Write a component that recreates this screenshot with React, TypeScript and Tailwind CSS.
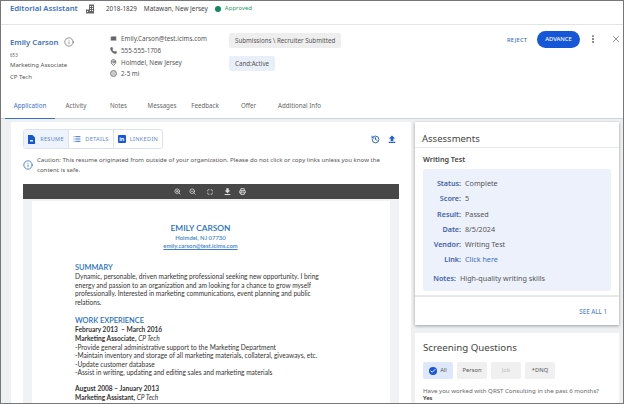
import {
  Check,
  History,
  Info,
  List,
  Mail,
  MapPin,
  Maximize,
  MoreVertical,
  Phone,
  Printer,
  X,
  ZoomIn,
  ZoomOut,
} from "lucide-react";

const tabs = [
  { label: "Activity", width: "w-[42px]" },
  { label: "Notes", width: "w-[43px]" },
  { label: "Messages", width: "w-[44px]" },
  { label: "Feedback", width: "w-[42px]" },
  { label: "Offer", width: "w-[45px]" },
  { label: "Additional Info", width: "w-[57px]" },
];

const results = [
  ["Status:", "Complete"],
  ["Score:", "5"],
  ["Result:", "Passed"],
  ["Date:", "8/5/2024"],
  ["Vendor:", "Writing Test"],
];

const duties = [
  "-Provide general administrative support to the Marketing Department",
  "-Maintain inventory and storage of all marketing materials, collateral, giveaways, etc.",
  "-Update customer database",
  "-Assist in writing, updating and editing sales and marketing materials",
];

function ArrowBar({ up, className }: { up?: boolean; className: string }) {
  return (
    <svg className={className} viewBox="0 0 10 10" fill="currentColor">
      <path d={up ? "M5 0.5 9 4.5H6.7V7.5H3.3V4.5H1zM1 8.5h8V10H1z" : "M3.3 0.5H6.7V3.5H9L5 7.5 1 3.5H3.3zM1 8.5h8V10H1z"} />
    </svg>
  );
}

export default function App() {
  return (
    <div className="w-[624px] h-[404px] overflow-hidden flex flex-col bg-white border border-[#777] font-['Noto_Sans',sans-serif] text-[#444]">
      {/* job bar */}
      <div className="h-[24px] shrink-0 flex items-center pl-[9px] pb-[8px] border-b border-[#e4e4e4]">
        <span className="text-[7.7px] font-semibold text-[#3d6fc4] w-[75px] whitespace-nowrap">Editorial Assistant</span>
        <svg className="w-[10px] h-[10px] text-[#666] mr-[11px]" viewBox="0 0 10 10" fill="currentColor">
          <path d="M4 0.5h5v9H1v-4h3zM5 2v1h1V2zM7 2v1h1V2zM5 4v1h1V4zM7 4v1h1V4zM5 6v1h1V6zM7 6v1h1V6zM2 7v1h1V7z" />
        </svg>
        <span className="text-[6.3px] text-[#444] mr-[7px]">2018-1829</span>
        <span className="text-[6.4px] text-[#444] mr-[7px]">Matawan, New Jersey</span>
        <span className="w-[6px] h-[6px] rounded-full bg-[#0f8a5f] mr-[4px]" />
        <span className="text-[6px] text-[#2b9a6b]">Approved</span>
      </div>

      {/* candidate */}
      <div className="h-[66px] shrink-0 flex pl-[9px]">
        <div className="w-[100px] pt-[10px]">
          <div className="flex items-center gap-[6px]">
            <span className="text-[7.7px] leading-[14px] font-semibold text-[#3d6fc4]">Emily Carson</span>
            <Info className="w-[10px] h-[10px] text-[#555]" strokeWidth={1.5} />
          </div>
          <div className="text-[4.5px] leading-[8px] text-[#666] mt-[2px]">653</div>
          <div className="text-[6px] leading-[11.5px] text-[#555] mt-[1px]">Marketing Associate</div>
          <div className="text-[6px] leading-[11.5px] text-[#555]">CP Tech</div>
        </div>
        <div className="w-[119px] pt-[8px] flex flex-col text-[6.3px] text-[#555]">
          <div className="h-[11.7px] flex items-center gap-[4px]">
            <Mail className="w-[7px] h-[7px] text-[#666]" fill="#666" stroke="#fff" strokeWidth={1.5} />
            Emily.Carson@test.icims.com
          </div>
          <div className="h-[11.7px] flex items-center gap-[4px]">
            <Phone className="w-[7px] h-[7px] text-[#666]" fill="#666" />
            555-555-1706
          </div>
          <div className="h-[11.7px] flex items-center gap-[4px]">
            <MapPin className="w-[7px] h-[7px] text-[#666]" strokeWidth={3} />
            Holmdel, New Jersey
          </div>
          <div className="h-[11.7px] flex items-center gap-[4px]">
            <span className="w-[7px] h-[7px] rounded-full border border-[#888] bg-[#ccc]" />
            2-5 mi
          </div>
        </div>
        <div className="w-[278px] pt-[8px] flex flex-col items-start gap-[8px] text-[6.2px] text-[#555]">
          <span className="h-[15px] px-[6px] flex items-center rounded-[2px] bg-[#eeeeee]">Submissions \ Recruiter Submitted</span>
          <span className="h-[15px] px-[6px] flex items-center rounded-[2px] bg-[#e9eff8]">Cand:Active</span>
        </div>
        <div className="flex-1 flex items-start pt-[6px]">
          <span className="w-[22px] text-[5.8px] font-medium text-[#3d6fc4] tracking-[0.2px] mt-[5px] mr-[8px]">REJECT</span>
          <span className="h-[17px] w-[43px] rounded-full bg-[#1557d6] text-white text-[5.8px] font-medium flex items-center justify-center">ADVANCE</span>
          <MoreVertical className="w-[10px] h-[10px] text-[#555] ml-[8px] mt-[3px]" strokeWidth={2.5} />
          <X className="w-[10px] h-[10px] text-[#555] ml-[13px] mt-[3px]" strokeWidth={1.5} />
        </div>
      </div>

      {/* tabs */}
      <div className="h-[28px] shrink-0 flex items-end pl-[4px] border-b border-[#cfd2d4] text-[6.2px] text-[#666]">
        <div className="h-[27px] w-[50px] pt-[2px] flex items-center justify-center text-[#3d6fc4] border-b border-[#3d6fc4] mb-[-1px]">Application</div>
        {tabs.map((t) => (
          <div key={t.label} className={`h-[27px] ${t.width} pt-[2px] flex items-center justify-center whitespace-nowrap`}>
            {t.label}
          </div>
        ))}
      </div>

      {/* body */}
      <div className="flex-1 min-h-0 flex gap-[4px] bg-[#eef0f2] pt-[3px] pl-[10px] pr-[4px] overflow-hidden">
        <div className="w-[400px] shrink-0 bg-white px-[12px] pt-[7px] flex flex-col">
          <div className="flex items-center justify-between pr-[3px]">
            <div className="h-[20px] flex items-center rounded-[3px] border border-[#dbe3ee] text-[5.6px] tracking-[0.3px] text-[#5d86cc]">
              <div className="h-full w-[45px] flex items-center justify-center gap-[5px] bg-[#edf2fb] border-r border-[#dbe3ee] rounded-l-[3px]">
                <svg className="w-[7px] h-[9px] text-[#1557d6]" viewBox="0 0 7 9" fill="currentColor">
                  <path d="M0 0h4.5L7 2.5V9H0zM2 5v1.5h3V5z" fillRule="evenodd" />
                </svg>
                RESUME
              </div>
              <div className="h-full w-[45px] flex items-center justify-center gap-[4px] border-r border-[#dbe3ee]">
                <List className="w-[8px] h-[8px] text-[#1557d6]" strokeWidth={2.5} />
                DETAILS
              </div>
              <div className="h-full w-[48px] flex items-center justify-center gap-[4px]">
                <span className="w-[8px] h-[8px] rounded-[1px] bg-[#1557d6] text-white text-[5.5px] leading-[8px] font-bold text-center tracking-normal">in</span>
                LINKEDIN
              </div>
            </div>
            <div className="flex items-center gap-[8px] text-[#1f5fd0]">
              <History className="w-[9px] h-[9px]" strokeWidth={2.5} />
              <ArrowBar up className="w-[8px] h-[8px]" />
            </div>
          </div>

          <div className="flex items-center gap-[4px] mt-[6px] h-[20px]">
            <Info className="w-[10px] h-[10px] text-[#2f6fe0] shrink-0" strokeWidth={2} />
            <p className="text-[6.1px] leading-[9.7px] text-[#555]">
              Caution: This resume originated from outside of your organization. Please do not click or copy links unless you know the content is safe.
            </p>
          </div>

          <div className="h-[15px] mt-[9px] shrink-0 bg-[#474747] flex items-center justify-center text-[#ddd]">
            <div className="flex items-center ml-[-2px]">
              <ZoomIn className="w-[7px] h-[7px]" strokeWidth={2.5} />
              <ZoomOut className="w-[7px] h-[7px] ml-[8px]" strokeWidth={2.5} />
              <Maximize className="w-[6px] h-[6px] ml-[11px]" strokeWidth={3} />
              <ArrowBar className="w-[7px] h-[7px] ml-[11px]" />
              <Printer className="w-[7px] h-[7px] ml-[8px]" strokeWidth={3} />
            </div>
          </div>

          <div className="flex-1 min-h-0 bg-[#f0f2f4] px-[9px] pt-[2px] overflow-hidden">
            <div className="h-[260px] bg-white pl-[43px] pr-[64px] pt-[21.5px] font-['Lato',sans-serif] text-[6.6px] leading-[8.6px] text-[#333]">
              <div className="text-center text-[8.4px] leading-[11px] font-semibold text-[#1e70c1]">EMILY CARSON</div>
              <div className="text-center text-[5.9px] leading-[8px] font-semibold text-[#3b82c8] mt-[0.5px]">Holmdel, NJ 07730</div>
              <div className="text-center text-[5.9px] leading-[8px] font-semibold text-[#3b82c8] underline whitespace-nowrap">emily.carson@test.icims.com</div>
              <div className="mt-[13px] text-[7.4px] leading-[9px] font-semibold text-[#1e70c1]">SUMMARY</div>
              <p className="w-[250px]">
                Dynamic, personable, driven marketing professional seeking new opportunity. I bring energy and passion to an organization and am looking for a chance to grow myself professionally. Interested in marketing communications, event planning and public relations.
              </p>
              <div className="mt-[10px] text-[7.4px] leading-[9px] font-semibold text-[#1e70c1] whitespace-nowrap">WORK EXPERIENCE</div>
              <div className="font-bold whitespace-nowrap">February 2013 &nbsp;– March 2016</div>
              <div className="whitespace-nowrap">
                <span className="font-bold">Marketing Associate,</span> <i>CP Tech</i>
              </div>
              {duties.map((d) => (
                <div key={d} className="whitespace-nowrap">{d}</div>
              ))}
              <div className="font-bold mt-[7.5px] whitespace-nowrap">August 2008 – January 2013</div>
              <div className="whitespace-nowrap">
                <span className="font-bold">Marketing Assistant,</span> <i>CP Tech</i>
              </div>
            </div>
          </div>
        </div>

        {/* right column */}
        <div className="w-[204px] shrink-0 flex flex-col gap-[8px]">
          <div className="bg-white shadow-[0_1px_3px_rgba(0,0,0,0.35)] shrink-0">
            <div className="h-[26px] pt-[9px] flex items-center px-[7px] border-b border-[#e6e8ea] text-[9.5px] text-[#444]">Assessments</div>
            <div className="px-[8px] pt-[6px] pb-[4px] border-b-2 border-[#e6e8ea]">
              <div className="text-[7.2px] leading-[11px] font-semibold text-[#444]">Writing Test</div>
              <div className="mt-[4px] h-[122px] rounded-[2px] bg-[#ecf1fb] pt-[7px] text-[7.2px]">
                {results.map(([k, v]) => (
                  <div key={k} className="flex h-[15.2px] items-center">
                    <span className="w-[38px] text-right font-semibold text-[#3f5fa8]">{k}</span>
                    <span className="ml-[4px] text-[#555]">{v}</span>
                  </div>
                ))}
                <div className="flex h-[15.2px] items-center">
                  <span className="w-[38px] text-right font-semibold text-[#3f5fa8]">Link:</span>
                  <span className="ml-[4px] text-[#3d6fc4]">Click here</span>
                </div>
                <div className="flex h-[15.2px] items-center mt-[4px]">
                  <span className="w-[33px] text-right font-semibold text-[#3f5fa8]">Notes:</span>
                  <span className="ml-[4px] text-[#555]">High-quality writing skills</span>
                </div>
              </div>
            </div>
            <div className="h-[28px] pt-[1px] flex items-center justify-end pr-[12px] text-[6.2px] font-medium text-[#5d86cc]">SEE ALL 1</div>
          </div>

          <div className="flex-1 bg-white px-[8px] pt-[8px]">
            <div className="text-[9.7px] leading-[14px] text-[#444] whitespace-nowrap">Screening Questions</div>
            <div className="flex gap-[4px] mt-[7px] text-[5.8px] text-[#555]">
              <span className="h-[17px] w-[30px] rounded-[2px] bg-[#dfe8fa] flex items-center justify-center gap-[3px]">
                <span className="w-[8px] h-[8px] rounded-full bg-[#1557d6] flex items-center justify-center">
                  <Check className="w-[6px] h-[6px] text-white" strokeWidth={4} />
                </span>
                All
              </span>
              <span className="h-[17px] w-[30px] rounded-[2px] bg-[#f0f0f0] flex items-center justify-center">Person</span>
              <span className="h-[17px] w-[30px] rounded-[2px] bg-[#f0f0f0] text-[#bbb] flex items-center justify-center">Job</span>
              <span className="h-[17px] w-[30px] rounded-[2px] bg-[#f0f0f0] flex items-center justify-center">*DNQ</span>
            </div>
            <div className="mt-[8px] text-[6.1px] leading-[8px] text-[#666] whitespace-nowrap">Have you worked with QRST Consulting in the past 6 months?</div>
            <div className="text-[5.8px] leading-[7px] font-semibold text-[#333]">Yes</div>
          </div>
        </div>
      </div>
    </div>
  );
}
